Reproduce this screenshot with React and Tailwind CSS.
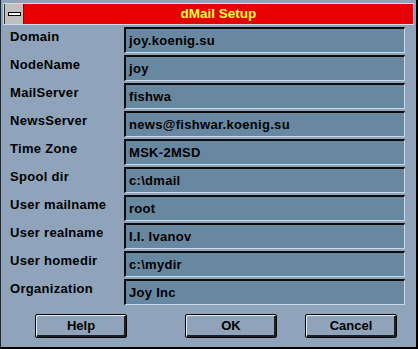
const fields = [
  ["Domain", "joy.koenig.su"],
  ["NodeName", "joy"],
  ["MailServer", "fishwa"],
  ["NewsServer", "news@fishwar.koenig.su"],
  ["Time Zone", "MSK-2MSD"],
  ["Spool dir", "c:\\dmail"],
  ["User mailname", "root"],
  ["User realname", "I.I. Ivanov"],
  ["User homedir", "c:\\mydir"],
  ["Organization", "Joy Inc"],
];

const Button = ({ label, className }) => (
  <button
    className={
      "h-[24px] w-[92px] rounded-[2px] border border-black bg-[#8fa4ba] text-[13px] font-bold text-black shadow-[inset_1px_1px_0_#e4eef8,inset_-2px_-2px_0_#1a2028] " +
      className
    }
  >
    {label}
  </button>
);

const App = () => {
  return (
    <div
      className="w-[418px] h-[349px] bg-[#8fa4ba] border-l border-l-[#1c2630] border-r-2 border-b-2 border-r-black border-b-black flex flex-col"
      style={{ fontFamily: '"Liberation Sans", Arial, sans-serif' }}
    >
      {/* Title bar */}
      <div className="mt-[3px] ml-[2px] mr-[2px] h-[22px] border border-[#d0dce8] flex">
        <div className="w-[20px] h-full bg-[#c0c0c0] border-l border-r border-[#303030] flex items-center justify-center">
          <div className="w-[13px] h-[4px] bg-white border border-black"></div>
        </div>
        <div className="flex-1 h-full bg-[#e80000] flex items-center justify-center text-[13.5px] font-bold text-[#ffff40] leading-none pb-[1px]">
          dMail Setup
        </div>
      </div>

      {/* Fields */}
      <div className="mt-[2px] pl-[9px] flex flex-col gap-[2px]">
        {fields.map(([label, value]) => (
          <div key={label} className="flex h-[26px]">
            <div className="w-[114px] pt-[2px] text-[13px] leading-[16px] font-bold tracking-[0.3px] text-black whitespace-nowrap">{label}</div>
            <div className="w-[281px] h-full bg-[#6887a0] border-t-2 border-l-2 border-t-[#0c0c0c] border-l-[#0c0c0c] border-b border-r border-b-[#c8d8e8] border-r-[#c8d8e8] pl-[3px] pt-[4px] text-[13px] leading-[16px] font-bold tracking-[0.3px] text-black whitespace-nowrap">
              {value}
            </div>
          </div>
        ))}
      </div>

      {/* Buttons */}
      <div className="mt-[9px] flex">
        <Button label="Help" className="ml-[34px]" />
        <Button label="OK" className="ml-[58px]" />
        <Button label="Cancel" className="ml-[28px] w-[91px]" />
      </div>
    </div>
  );
};

export default App;
